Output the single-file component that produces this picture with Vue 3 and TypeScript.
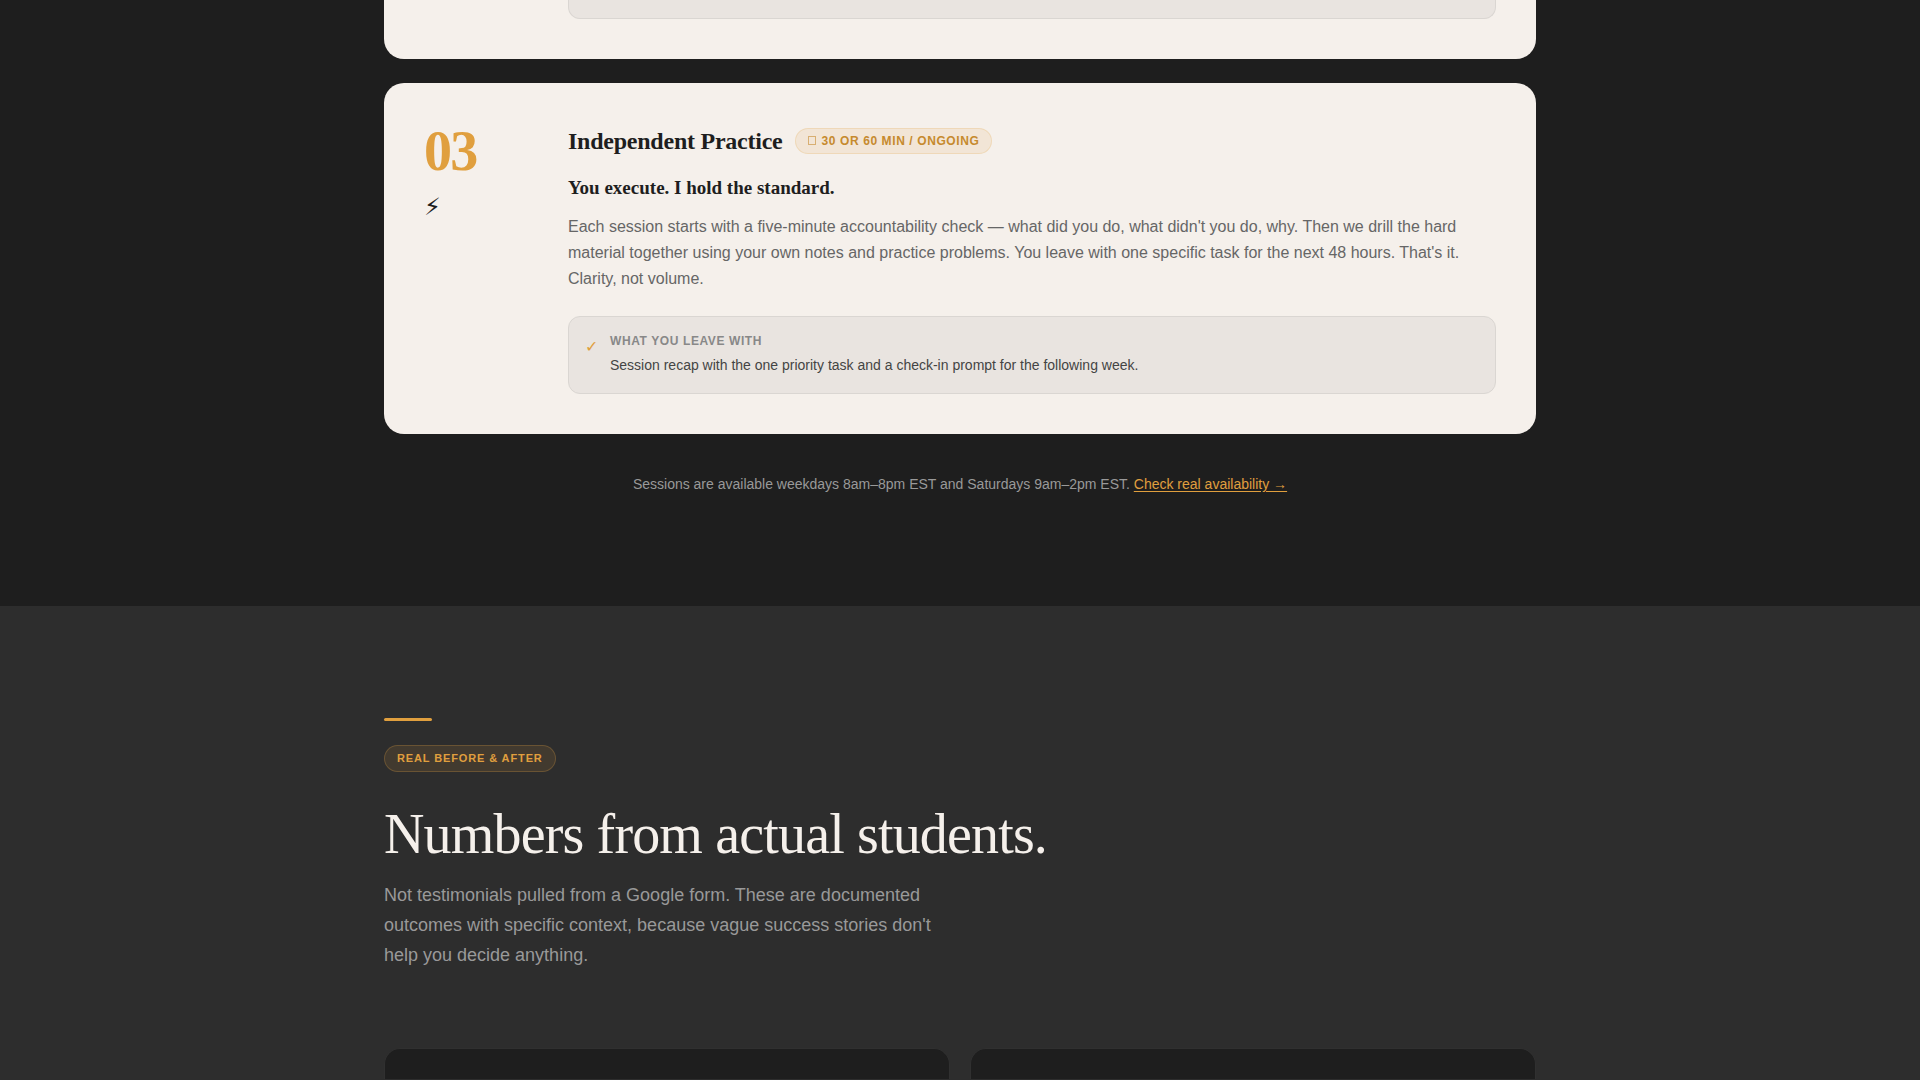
<script setup lang="ts">
interface Step {
  number: string
  icon: string
  title: string
  duration: string
  heading: string
  body: string
  takeawayLabel: string
  takeaway: string
}

const step: Step = {
  number: '03',
  icon: '⚡\uFE0E',
  title: 'Independent Practice',
  duration: '30 or 60 min / ongoing',
  heading: 'You execute. I hold the standard.',
  body: "Each session starts with a five-minute accountability check — what did you do, what didn't you do, why. Then we drill the hard material together using your own notes and practice problems. You leave with one specific task for the next 48 hours. That's it. Clarity, not volume.",
  takeawayLabel: 'What you leave with',
  takeaway: 'Session recap with the one priority task and a check-in prompt for the following week.',
}
</script>

<template>
  <main class="page">
    <section class="process">
      <div class="container">
        <div class="card card-prev">
          <div class="takeaway takeaway-prev"></div>
        </div>

        <article class="card">
          <div class="marker">
            <span class="number">{{ step.number }}</span>
            <span class="icon">{{ step.icon }}</span>
          </div>
          <div class="content">
            <header class="title-row">
              <h2 class="title">{{ step.title }}</h2>
              <span class="duration"><span class="glyph-box"></span>{{ step.duration }}</span>
            </header>
            <h3 class="heading">{{ step.heading }}</h3>
            <p class="body">{{ step.body }}</p>
            <div class="takeaway">
              <span class="check">✓</span>
              <div>
                <p class="takeaway-label">{{ step.takeawayLabel }}</p>
                <p class="takeaway-text">{{ step.takeaway }}</p>
              </div>
            </div>
          </div>
        </article>

        <p class="note">
          Sessions are available weekdays 8am–8pm EST and Saturdays 9am–2pm EST.
          <a href="#availability">Check real availability →</a>
        </p>
      </div>
    </section>

    <section class="results">
      <div class="container">
        <div class="rule"></div>
        <span class="tag">Real before &amp; after</span>
        <h1 class="display">Numbers from actual students.</h1>
        <p class="lead">
          Not testimonials pulled from a Google form. These are documented outcomes with specific
          context, because vague success stories don't help you decide anything.
        </p>
        <div class="grid">
          <div class="result"></div>
          <div class="result"></div>
        </div>
      </div>
    </section>
  </main>
</template>

<style>
body {
  margin: 0;
  background: #2d2d2d;
}
</style>

<style scoped>
.page {
  font-family: "Liberation Sans", Arial, sans-serif;
  color: #1e1e1e;
}

h1,
h2,
h3,
p {
  margin: 0;
}

.container {
  max-width: 1152px;
  margin: 0 auto;
}

.process {
  background: #1e1e1e;
  padding-bottom: 112px;
}

.card {
  display: flex;
  gap: 24px;
  padding: 40px;
  border-radius: 20px;
  background: #f5f0eb;
}

.card-prev {
  padding-top: 0;
  margin-bottom: 24px;
  border-radius: 0 0 20px 20px;
}

.takeaway.takeaway-prev {
  flex: 1;
  height: 18px;
  margin: 0 0 0 144px;
  padding: 0;
  border-top: 0;
  border-radius: 0 0 12px 12px;
}

.marker {
  display: flex;
  flex: 0 0 120px;
  flex-direction: column;
  gap: 12px;
}

.number {
  font: 700 56px/56px "Liberation Serif", "Times New Roman", serif;
  letter-spacing: -0.03em;
  color: #e09f3e;
}

.icon {
  font-size: 24px;
  line-height: 32px;
}

.content {
  flex: 1;
  min-width: 0;
}

.title-row {
  display: flex;
  flex-wrap: wrap;
  align-items: center;
  gap: 12px;
  margin-bottom: 14px;
}

.title {
  font: 700 24px/36px "Liberation Serif", "Times New Roman", serif;
  letter-spacing: -0.01em;
}

.duration {
  display: inline-flex;
  align-items: center;
  padding: 4px 12px;
  border: 1px solid rgba(224, 159, 62, 0.2);
  border-radius: 13px;
  background: rgba(224, 159, 62, 0.12);
  color: #c68a2e;
  font-size: 12px;
  font-weight: 700;
  line-height: 16px;
  letter-spacing: 0.05em;
  text-transform: uppercase;
}

.glyph-box {
  width: 6px;
  height: 7px;
  margin: 0 6px 1px 0;
  border: 1px solid rgba(198, 138, 46, 0.6);
}

.heading {
  margin-bottom: 11px;
  font: 700 19px/30px "Liberation Serif", "Times New Roman", serif;
}

.body {
  color: #666;
  font-size: 16px;
  line-height: 26px;
}

.takeaway {
  display: flex;
  gap: 12px;
  margin-top: 24px;
  padding: 16px;
  border: 1px solid #dad6d2;
  border-radius: 12px;
  background: #e9e4e0;
}

.check {
  color: #e09f3e;
  font-size: 16px;
  line-height: 28px;
}

.takeaway-label {
  margin-bottom: 4px;
  color: #888;
  font-size: 12px;
  font-weight: 700;
  line-height: 16px;
  letter-spacing: 0.05em;
  text-transform: uppercase;
}

.takeaway-text {
  color: #444;
  font-size: 14px;
  line-height: 24px;
}

.note {
  margin-top: 40px;
  color: #999;
  font-size: 14px;
  line-height: 20px;
  text-align: center;
}

.note a {
  color: #e09f3e;
  text-decoration: underline;
  text-underline-offset: 2px;
}

.results {
  padding-top: 112px;
  background: #2d2d2d;
}

.rule {
  width: 48px;
  height: 3px;
  margin-bottom: 24px;
  border-radius: 2px;
  background: #e09f3e;
}

.tag {
  display: table;
  padding: 4px 12px;
  border: 1px solid rgba(224, 159, 62, 0.25);
  border-radius: 14px;
  background: rgba(224, 159, 62, 0.12);
  color: #e09f3e;
  font-size: 11px;
  font-weight: 700;
  line-height: 17px;
  letter-spacing: 0.08em;
  text-transform: uppercase;
}

.display {
  margin: 30px 0 14px;
  color: #f5f0eb;
  font: 400 56px/64px "Liberation Serif", "Times New Roman", serif;
  letter-spacing: -0.015em;
}

.lead {
  max-width: 560px;
  color: #999;
  font-size: 18px;
  line-height: 30px;
}

.grid {
  display: grid;
  grid-template-columns: 1fr 1fr;
  gap: 20px;
  margin-top: 78px;
}

.result {
  height: 30px;
  border: 1px solid #303030;
  border-bottom: 0;
  border-radius: 16px 16px 0 0;
  background: #1e1e1e;
}
</style>
